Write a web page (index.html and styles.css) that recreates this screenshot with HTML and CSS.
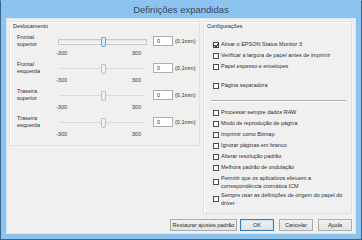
FILE: index.html
```html
<!DOCTYPE html>
<html lang="pt">
<head>
    <meta charset="UTF-8">
    <title>Definições expandidas</title>
    <link rel="stylesheet" href="styles.css">
</head>
<body>
    <div class="window">
        <div class="titlebar">Definições expandidas</div>
        <div class="client">
            <div class="panels">
                <section class="group offsets">
                    <div class="group-title">Deslocamento</div>

                    <div class="offset-row">
                        <div class="offset-label">Frontal<br>superior</div>
                        <div class="slider-col">
                            <div class="slider active"><span class="thumb"></span></div>
                            <div class="scale"><span>-300</span><span>300</span></div>
                        </div>
                        <div class="value">0</div>
                        <span class="unit">(0,1mm)</span>
                    </div>

                    <div class="offset-row">
                        <div class="offset-label">Frontal<br>esquerda</div>
                        <div class="slider-col">
                            <div class="slider"><span class="thumb"></span></div>
                            <div class="scale"><span>-300</span><span>300</span></div>
                        </div>
                        <div class="value">0</div>
                        <span class="unit">(0,1mm)</span>
                    </div>

                    <div class="offset-row">
                        <div class="offset-label">Traseira<br>superior</div>
                        <div class="slider-col">
                            <div class="slider"><span class="thumb"></span></div>
                            <div class="scale"><span>-300</span><span>300</span></div>
                        </div>
                        <div class="value">0</div>
                        <span class="unit">(0,1mm)</span>
                    </div>

                    <div class="offset-row">
                        <div class="offset-label">Traseira<br>esquerda</div>
                        <div class="slider-col">
                            <div class="slider"><span class="thumb"></span></div>
                            <div class="scale"><span>-300</span><span>300</span></div>
                        </div>
                        <div class="value">0</div>
                        <span class="unit">(0,1mm)</span>
                    </div>
                </section>

                <section class="group settings">
                    <div class="group-title">Configurações</div>

                    <div class="checks first">
                        <label class="check"><span class="box checked"></span>Ativar o EPSON Status Monitor 3</label>
                        <label class="check"><span class="box"></span>Verificar a largura de papel antes de imprimir</label>
                        <label class="check"><span class="box"></span>Papel espesso e envelopes</label>
                        <label class="check spaced"><span class="box"></span>Página separadora</label>
                    </div>

                    <hr class="separator">

                    <div class="checks">
                        <label class="check"><span class="box"></span>Processar sempre dados RAW</label>
                        <label class="check"><span class="box"></span>Modo de reprodução de página</label>
                        <label class="check"><span class="box"></span>Imprimir como Bitmap</label>
                        <label class="check"><span class="box"></span>Ignorar páginas em branco</label>
                        <label class="check"><span class="box"></span>Alterar resolução padrão</label>
                        <label class="check"><span class="box"></span>Melhora padrão de ondulação</label>
                        <label class="check double"><span class="box"></span><span>Permitir que os aplicativos efetuem a<br>correspondência cromática ICM</span></label>
                        <label class="check double"><span class="box"></span><span>Sempre usar as definições de origem do papel do<br>driver</span></label>
                    </div>
                </section>
            </div>

            <div class="actions">
                <button class="btn wide">Restaurar ajustes padrão</button>
                <button class="btn default">OK</button>
                <button class="btn">Cancelar</button>
                <button class="btn">Ajuda</button>
            </div>
        </div>
    </div>
</body>
</html>
```

FILE: styles.css
```css
body {
    margin: 0;
    width: 362px;
    height: 240px;
    overflow: hidden;
    font-family: 'Liberation Sans', Arial, sans-serif;
    font-size: 5.5px;
    color: #2e2e2e;
}

.window {
    box-sizing: border-box;
    width: 362px;
    height: 240px;
    background-color: #8cc4ef;
    border: 1px solid #3a6489;
    border-top-color: #8cc4ef;
    display: flex;
    flex-direction: column;
}

.titlebar {
    height: 17px;
    line-height: 17px;
    text-align: center;
    font-size: 9.5px;
    color: #3b4658;
}

.client {
    box-sizing: border-box;
    margin: 0 5px 0 5px;
    height: 216px;
    background-color: #f0f0f0;
    border: 1px solid #d6e6f2;
    padding: 2px 3px 0 2px;
    display: flex;
    flex-direction: column;
}

.panels {
    display: flex;
    align-items: flex-start;
    gap: 3px;
}

.group {
    box-sizing: border-box;
    border: 1px solid #e0e0e0;
    box-shadow: inset 1px 1px 0 #fff;
}

.group-title {
    line-height: 6px;
    padding-left: 3px;
    margin-top: 1px;
}

/* deslocamento */

.offsets {
    width: 191px;
    height: 125px;
}

.offset-row {
    display: flex;
    align-items: flex-start;
    height: 27px;
    padding-left: 7px;
}

.offsets .group-title + .offset-row {
    margin-top: 5px;
}

.offset-label {
    width: 41px;
    line-height: 7px;
}

.slider-col {
    width: 89px;
    padding-top: 3px;
}

.slider {
    position: relative;
    height: 10px;
}

.slider::before {
    content: '';
    position: absolute;
    left: 2px;
    right: 2px;
    top: 4px;
    height: 1px;
    background-color: #dadada;
}

.slider.active::before {
    left: 0;
    right: 0;
    top: 2px;
    height: 4px;
    background: linear-gradient(#e6e6e6, #f7f7f7);
    border: 1px solid #c9c9c9;
}

.thumb {
    position: absolute;
    left: 43px;
    top: 0;
    width: 3px;
    height: 8px;
    border: 1px solid #c0c0c0;
    border-radius: 1px 1px 2px 2px;
    background-color: #f2f2f2;
}

.slider.active .thumb {
    border-color: #6aa3da;
    background-color: #dcebf9;
}

.scale {
    display: flex;
    justify-content: space-between;
    margin-top: 3px;
    padding: 0 6px 0 0;
    line-height: 7px;
    color: #3a3a3a;
}

.scale span:first-child {
    margin-left: -2px;
}

.value {
    box-sizing: border-box;
    width: 20px;
    height: 10px;
    margin: 2px 0 0 6px;
    padding-left: 3px;
    line-height: 8px;
    background-color: #fff;
    border: 1px solid #abadb3;
}

.unit {
    margin: 4px 0 0 2px;
    line-height: 7px;
}

/* configurações */

.settings {
    width: 149px;
    height: 193px;
    padding: 0 5px 0 9px;
}

.settings .group-title {
    margin-left: -9px;
}

.checks.first {
    margin-top: 10px;
}

.check {
    display: flex;
    align-items: center;
    gap: 2px;
    height: 11px;
    line-height: 7px;
    white-space: nowrap;
}

.check.spaced {
    margin-top: 8px;
}

.check.double {
    height: 17px;
    line-height: 8px;
}

.box {
    box-sizing: border-box;
    flex: none;
    width: 6px;
    height: 6px;
    background-color: #fff;
    border: 1px solid #4a4a4a;
    position: relative;
}

.box.checked::after {
    content: '';
    position: absolute;
    left: 1px;
    top: -1px;
    width: 2px;
    height: 4px;
    border: solid #111;
    border-width: 0 1px 1px 0;
    transform: rotate(40deg);
}

.separator {
    margin: 9px 0 5px -2px;
    border: none;
    border-top: 1px solid #a8a8a8;
    border-bottom: 1px solid #fff;
}

/* botões */

.actions {
    display: flex;
    justify-content: flex-end;
    gap: 5px;
    margin-top: 5px;
}

.btn {
    box-sizing: border-box;
    width: 34px;
    height: 12px;
    padding: 0;
    font-family: inherit;
    font-size: 5.5px;
    color: #2e2e2e;
    background: linear-gradient(#f0f0f0, #e3e3e3);
    border: 1px solid #acacac;
}

.btn.wide {
    width: 67px;
    margin-right: -2px;
}

.btn.default {
    border-color: #3c7fb1;
    box-shadow: inset 0 0 0 1px #c8e0f4;
}
```
